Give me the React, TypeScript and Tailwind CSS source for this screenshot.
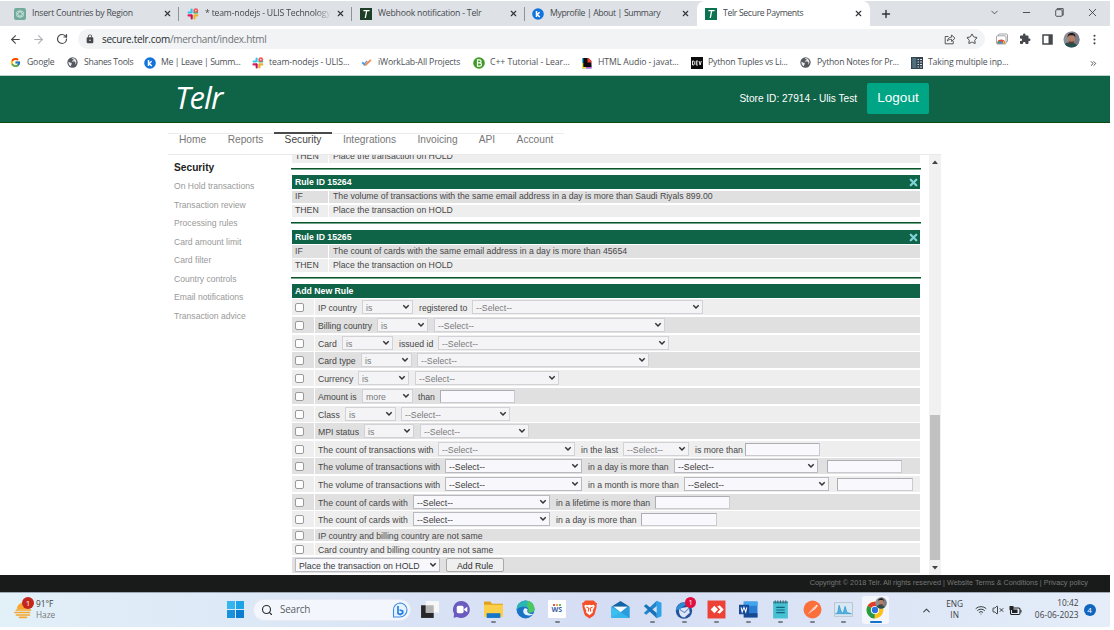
import React from 'react';
import {
  X, Plus, ChevronDown, Minus, ArrowLeft, ArrowRight, RotateCw, Star, MoreVertical,
  ChevronUp, Wifi, VolumeX, Search, ChevronsRight,
} from 'lucide-react';
import { FcGoogle } from 'react-icons/fc';
import { MdExtension, MdLock } from 'react-icons/md';

type Kids = { children?: React.ReactNode };

/* ---------- small site icons ---------- */

const SlackIcon = () => (
  <svg viewBox="0 0 12 12" className="size-3 shrink-0">
    <g strokeWidth="2.1" strokeLinecap="round">
      <path d="M4.6 1.6v2.6M1.6 4.5h2.4" stroke="#36c5f0" />
      <path d="M7.3 4.4h2.9" stroke="#2eb67d" />
      <path d="M1.5 7.4h2.7" stroke="#e01e5a" />
      <path d="M4.7 7.6v2.9" stroke="#c2185b" />
      <path d="M7.4 7.4h2.9M7.4 7.6v2.8" stroke="#ecb22e" />
    </g>
    <circle cx="8.8" cy="2.6" r="2.4" fill="#ef5a5a" />
    <circle cx="8.8" cy="2.6" r="0.8" fill="#ffd5d5" />
  </svg>
);

const KIcon = () => (
  <svg viewBox="0 0 12 12" className="size-3 shrink-0">
    <circle cx="6" cy="6" r="5.8" fill="#1273de" />
    <path d="M4.5 3v6M7.6 4.2 5.2 6.5 7.8 9" stroke="#fff" strokeWidth="1.5" fill="none" />
  </svg>
);

const GlobeIcon = () => (
  <svg viewBox="0 0 12 12" className="size-[11px] shrink-0">
    <circle cx="6" cy="6" r="5.6" fill="#55595e" />
    <path d="M1.6 5.2c1.2 0 1.6 1.2 2.8 1.2 1 0 1.2 1.3.2 2.2-.4.5-.2 1.2.2 1.8C2.400 9.800 1.300 7.600 1.600 5.200zM5 1.500c1 .9 2.600.4 2.500 1.600-.2 1.300-1.900.6-2.300 1.700 1.200.6 2.600-.4 3.700.7.8.9-.2 2 .4 2.900C11 6 10.400 3 8 1.700 7 1.300 6 1.200 5 1.500z" fill="#e9ebed" />
  </svg>
);

const GptIcon = () => (
  <svg viewBox="0 0 12 12" className="size-3 shrink-0">
    <rect width="12" height="12" rx="2" fill="#74aa9c" />
    <g fill="none" stroke="#cfe8e1" strokeWidth=".6">
      <ellipse cx="6" cy="6" rx="2" ry="4" />
      <ellipse cx="6" cy="6" rx="2" ry="4" transform="rotate(60 6 6)" />
      <ellipse cx="6" cy="6" rx="2" ry="4" transform="rotate(120 6 6)" />
    </g>
  </svg>
);

const TelrIcon = ({ dark }: { dark?: boolean }) => (
  <svg viewBox="0 0 12 12" className="size-3 shrink-0">
    <rect width="12" height="12" fill={dark ? '#1d3f27' : '#0c7350'} />
    <path d="M3.400 2.600h6.200M6.700 2.600 5.300 10" stroke="#fff" strokeWidth="1.300" fill="none" />
  </svg>
);

const CheckIcon = () => (
  <svg viewBox="0 0 12 12" className="size-[11px] shrink-0">
    <path d="M1.300 5.800 4.600 9" stroke="#4aa3df" strokeWidth="2.200" fill="none" />
    <path d="M4.600 9.200 10.800 3.200" stroke="#f08a4b" strokeWidth="2" fill="none" />
    <path d="M3.600 7.600 6.800 4.200" stroke="#7b8fc0" strokeWidth="1.500" fill="none" />
  </svg>
);

const BIcon = () => (
  <svg viewBox="0 0 12 12" className="size-3 shrink-0">
    <circle cx="6" cy="6" r="5.800" fill="#3f9a28" />
    <path d="M4.500 2.800h2a1.500 1.500 0 0 1 0 3.100h-2zM4.500 5.900h2.300a1.600 1.600 0 0 1 0 3.300H4.500z" fill="none" stroke="#fff" strokeWidth="1.200" />
  </svg>
);

const AudioIcon = () => (
  <svg viewBox="0 0 12 12" className="size-3 shrink-0">
    <path d="M1 1v10.500h9.500V8H3V1z" fill="#3bb6e8" />
    <path d="M1 6v5.500h4V6z" fill="#f4e04d" />
    <path d="M5 8v3.500h5.500V6z" fill="#c94fd0" />
    <path d="M2.300 1h5l3 3v6h-8z" fill="#0c0c0c" />
    <path d="M6.500 1h1l3 3v1.500h-4z" fill="#ef4136" />
  </svg>
);

const DevIcon = () => (
  <svg viewBox="0 0 12 12" className="size-3 shrink-0">
    <rect width="12" height="12" fill="#0b0b0b" />
    <path d="M1.500 4v4h.8c.8 0 1.100-.5 1.100-1.300V5.300c0-.8-.3-1.300-1.100-1.300zM7 4H5.200v4H7M5.200 6h1.500M8 4l1.100 4L10.300 4" fill="none" stroke="#fff" strokeWidth=".9" />
  </svg>
);

const PanelIcon = () => (
  <svg viewBox="0 0 12 12" className="size-3 shrink-0">
    <rect width="12" height="12" fill="#33434f" />
    <rect x="1.200" y="1" width="4" height="10" fill="#51707f" />
    <path d="M6.500 2.500h1.500M9 2.500h2M6.500 5h1.500M9 5h2M6.500 7.500h1.500M9 7.500h2M6.500 10h1.500M9 10h2" stroke="#d7dee2" strokeWidth="1" />
  </svg>
);

const Avatar = ({ className }: { className: string }) => (
  <svg viewBox="0 0 18 18" className={className}>
    <defs><clipPath id="face"><circle cx="9" cy="9" r="8.500" /></clipPath></defs>
    <g clipPath="url(#face)">
      <rect width="18" height="18" fill="#8d8f95" />
      <path d="M9 0h9v18H12z" fill="#7b7d86" />
      <path d="M0 18c1-5 4-6 8-6s7 2 8 6z" fill="#27504f" />
      <ellipse cx="9" cy="8" rx="3.600" ry="4.800" fill="#b57f66" />
      <path d="M4.800 7c0-4 2-5 4.200-5s4.400 1 4.200 5c-1-2-1.500-2.500-4.200-2.500S5.500 5 4.800 7z" fill="#1f1a1b" />
      <path d="M6.500 10.500c1.500 1 3.500 1 5 0 0 2-1 3.300-2.500 3.300s-2.500-1.300-2.500-3.300z" fill="#5b3b34" />
    </g>
  </svg>
);

/* ---------- browser chrome ---------- */

const Tab = ({ icon, title, sep, width, fade, track = '' }: { icon: React.ReactNode; title: string; sep?: boolean; width: string; fade?: boolean; track?: string }) => (
  <div className={`flex h-full shrink-0 items-center ${width}`}>
    {icon}
    <span className={`ml-1.5 w-[126px] overflow-hidden whitespace-nowrap text-[8.7px] text-[#45494d] ${track} ${fade ? '[mask-image:linear-gradient(to_right,#000_88%,transparent)]' : ''}`}>{title}</span>
    <X className="ml-[5px] size-[9px] shrink-0 text-[#303338]" strokeWidth={3} />
    {sep && <i className="ml-[6px] h-[14px] w-px bg-[#8f9398]" />}
  </div>
);

const Bookmark = ({ icon, label, width, track = '' }: { icon: React.ReactNode; label: string; width: string; track?: string }) => (
  <div className={`flex shrink-0 items-center ${width}`}>
    <span className="flex w-[17px] items-center">{icon}</span>
    <span className={`whitespace-nowrap text-[8.7px] text-[#4d5156] ${track}`}>{label}</span>
  </div>
);

const Browser = () => (
  <div className="font-['Open_Sans','Noto_Sans',sans-serif]">
    <div className="flex h-[25px] bg-[#dee1e6]">
      <div className="flex w-[697px] pl-[14px]">
        <Tab icon={<GptIcon />} title="Insert Countries by Region" sep width="w-[173px]" track="tracking-[-0.23px]" />
        <Tab icon={<SlackIcon />} title="* team-nodejs - ULIS Technology" sep width="w-[173px]" fade track="tracking-[-0.2px]" />
        <Tab icon={<TelrIcon dark />} title="Webhook notification - Telr" sep width="w-[172px]" track="tracking-[-0.22px]" />
        <Tab icon={<KIcon />} title="Myprofile | About | Summary" width="w-[160px]" track="tracking-[-0.38px]" />
      </div>
      <div className="w-[173px] rounded-t-lg bg-white pl-2">
        <Tab icon={<TelrIcon />} title="Telr Secure Payments" width="w-[160px]" track="tracking-[-0.35px]" />
      </div>
      <div className="flex flex-1 items-center text-[#303338]">
        <Plus className="ml-[10px] size-[12px]" strokeWidth={2.8} />
        <div className="flex items-center pb-[3px]">
          <ChevronDown className="ml-[97px] size-[11px]" strokeWidth={1.700} />
          <Minus className="ml-[21px] size-[11px]" strokeWidth={1.800} />
          <svg viewBox="0 0 9 9" className="ml-[23px] size-[9px]" fill="none" stroke="currentColor" strokeWidth=".8">
            <rect x=".7" y="1.700" width="6.500" height="6.600" rx="1" /><path d="M2.200 1.500V.6h6v6.600h-.8" />
          </svg>
          <X className="ml-[22px] size-[13px]" strokeWidth={1.500} />
        </div>
      </div>
    </div>
    <div className="flex h-6 items-center bg-white pt-[2px] text-[#45494d]">
      <ArrowLeft className="ml-[9px] size-[13px]" strokeWidth={2} />
      <ArrowRight className="ml-[10px] size-[13px] text-[#aeb1b5]" strokeWidth={2} />
      <RotateCw className="ml-[11px] size-[12px]" strokeWidth={2.400} />
      <div className="ml-[10px] flex h-5 w-[907px] items-center rounded-full bg-[#f1f3f4] pl-[7px]">
        <MdLock className="size-[10px]" />
        <span className="ml-[7px] w-[166px] whitespace-nowrap text-[10px] tracking-[-0.28px] text-[#707479]"><span className="text-[#2a2c2f]">secure.telr.com</span>/merchant/index.html</span>
        <svg viewBox="0 0 12 12" className="ml-[676px] size-[12px]" fill="none" stroke="currentColor" strokeWidth=".9">
          <path d="M4.500 3.500H1.200v7.300h8V8" /><path d="M3.400 8c.4-2.600 2-3.800 4.200-3.900V2l3.400 3.200-3.400 3.200V6.300C5.800 6.300 4.500 6.700 3.400 8z" />
        </svg>
        <Star className="ml-[10px] size-[12px]" strokeWidth={2} />
      </div>
      <svg viewBox="0 0 12 12" className="ml-[11px] size-[12px]">
        <rect x="2.500" y="1" width="9" height="8" rx="1" fill="none" stroke="#8a8e93" strokeWidth=".8" />
        <rect x=".5" y="2.800" width="9.500" height="8.200" rx="1" fill="#fff" stroke="#8a8e93" strokeWidth=".8" />
        <path d="M1.200 10.600a4 4 0 0 1 8 0z" fill="#e2483d" /><path d="M1.200 10.600 3 7.500l2.200 3.100z" fill="#34a853" /><path d="M9.200 10.600 7.800 7.800 5.200 10.600z" fill="#fbbc05" />
        <path d="M3 10.600a2.200 2.200 0 0 1 4.400 0z" fill="#4285f4" />
      </svg>
      <MdExtension className="ml-[11px] size-[12px]" />
      <svg viewBox="0 0 11 11" className="ml-[11px] size-[11px]"><path d="M1 1h9v9H1z" fill="none" stroke="#45494d" strokeWidth="1.500" /><path d="M6.500 1h3.500v9H6.500z" fill="#45494d" /></svg>
      <Avatar className="ml-[10px] size-[17px]" />
      <MoreVertical className="ml-[8px] size-[13px]" />
    </div>
    <div className="flex h-[25px] items-center bg-white pt-px pl-[10px]">
      <Bookmark icon={<FcGoogle className="size-[11px]" />} label="Google" width="w-[57px]" track="tracking-[-0.2px]" />
      <Bookmark icon={<GlobeIcon />} label="Shanes Tools" width="w-[77px]" track="tracking-[-0.32px]" />
      <Bookmark icon={<KIcon />} label="Me | Leave | Summ..." width="w-[108px]" track="tracking-[-0.42px]" />
      <Bookmark icon={<SlackIcon />} label="team-nodejs - ULIS..." width="w-[109px]" track="tracking-[-0.12px]" />
      <Bookmark icon={<CheckIcon />} label="iWorkLab-All Projects" width="w-[112px]" track="tracking-[-0.16px]" />
      <Bookmark icon={<BIcon />} label="C++ Tutorial - Lear..." width="w-[108px]" track="tracking-[-0.05px]" />
      <Bookmark icon={<AudioIcon />} label="HTML Audio - javat..." width="w-[110px]" track="tracking-[-0.1px]" />
      <Bookmark icon={<DevIcon />} label="Python Tuples vs Li..." width="w-[109px]" track="tracking-[-0.2px]" />
      <Bookmark icon={<GlobeIcon />} label="Python Notes for Pr..." width="w-[111px]" track="tracking-[-0.22px]" />
      <Bookmark icon={<PanelIcon />} label="Taking multiple inp..." width="w-[178px]" track="tracking-[-0.16px]" />
      <ChevronsRight className="size-[9px] text-[#45494d]" strokeWidth={2.500} />
    </div>
  </div>
);

/* ---------- rule list ---------- */

const RuleHead = ({ children, close }: Kids & { close?: boolean }) => (
  <div className="mx-px flex h-[14px] shrink-0 items-center justify-between bg-[#0f6347] px-[3px] text-[8.7px] font-bold text-white">
    <span className="pt-px">{children}</span>
    {close && <X className="mr-[-2px] size-[11px] text-[#7fd3d8]" strokeWidth={5} />}
  </div>
);

const Clause = ({ k, children, cls, bg }: Kids & { k: string; cls: string; bg: string }) => (
  <div className={`mx-px flex shrink-0 gap-px ${cls}`}>
    <div className={`flex w-[36px] items-center pl-[3px] ${bg}`}>{k}</div>
    <div className={`flex flex-1 items-center pl-1 whitespace-nowrap ${bg}`}>{children}</div>
  </div>
);

const Line = ({ cls }: { cls: string }) => <div className={`h-[2px] shrink-0 border-t border-[#0d5228] bg-[#6fa78d] ${cls}`} />;

const L = ({ children, w }: Kids & { w: string }) => <span className={`shrink-0 pt-[2px] leading-[12px] whitespace-nowrap ${w}`}>{children}</span>;

const Sel = ({ children = '--Select--', w, on }: Kids & { w: string; on?: boolean }) => (
  <div className={`flex h-[14px] shrink-0 items-center justify-between border pr-[2px] pl-[3px] text-[8.75px] leading-[12px] whitespace-nowrap ${w} ${on ? 'border-[#b9b9c0] bg-[#f7f7fc] text-[#3a3a3a]' : 'border-[#d2d2d6] bg-[#f4f4f7] text-[#7a7a7a]'}`}>
    <span className="pt-px">{children}</span>
    <svg viewBox="0 0 8 6" className="h-[6px] w-2"><path d="M1.300 1.300 4 4l2.700-2.700" fill="none" stroke="#333" strokeWidth="1.500" /></svg>
  </div>
);

const Inp = ({ w }: { w: string }) => <div className={`h-[13px] shrink-0 border border-[#cacad0] border-t-[#adadb4] border-l-[#adadb4] bg-[#f8f8fd] ${w}`} />;

const Row = ({ children, cls, alt }: Kids & { cls: string; alt?: boolean }) => (
  <div className={`mx-px flex shrink-0 gap-px ${cls}`}>
    <div className={`flex w-[22px] items-center pl-[3px] ${alt ? 'bg-[#e0e0e0]' : 'bg-[#eeeeee]'}`}>
      <span className="size-[9px] rounded-[2px] border border-[#9a9a9a] bg-white" />
    </div>
    <div className={`flex flex-1 items-center pl-[3px] ${alt ? 'bg-[#e0e0e0]' : 'bg-[#eeeeee]'}`}>{children}</div>
  </div>
);

const Rules = () => (
  <div className="flex h-[420px] w-[630px] flex-col overflow-hidden text-[8.7px] text-[#474747]">
    <div className="flex h-2 shrink-0 items-end overflow-hidden">
      <div className="flex-1"><Clause k="THEN" cls="h-[13px]" bg="bg-[#eeeeee]">Place the transaction on HOLD</Clause></div>
    </div>
    <Line cls="mt-[5px]" />
    <div className="mt-[5px] flex flex-col"><RuleHead close>Rule ID 15264</RuleHead></div>
    <Clause k="IF" cls="mt-[2px] h-3" bg="bg-[#e0e0e0]">The volume of transactions with the same email address in a day is more than Saudi Riyals 899.00</Clause>
    <Clause k="THEN" cls="mt-[2px] h-3" bg="bg-[#eeeeee]">Place the transaction on HOLD</Clause>
    <Line cls="mt-[5px]" />
    <div className="mt-[6px] flex flex-col"><RuleHead close>Rule ID 15265</RuleHead></div>
    <Clause k="IF" cls="mt-px h-[13px]" bg="bg-[#e0e0e0]">The count of cards with the same email address in a day is more than 45654</Clause>
    <Clause k="THEN" cls="mt-px h-[13px]" bg="bg-[#eeeeee]">Place the transaction on HOLD</Clause>
    <Line cls="mt-[5px]" />
    <div className="mt-[5px] flex flex-col"><RuleHead>Add New Rule</RuleHead></div>

    <Row cls="mt-px h-4">
      <L w="w-[44px]">IP country</L><Sel w="w-[51px]">is</Sel><L w="ml-[6px] w-[53px]">registered to</L><Sel w="w-[231px]" />
    </Row>
    <Row cls="mt-[2px] h-4" alt>
      <L w="w-[59px]">Billing country</L><Sel w="w-[51px]">is</Sel><Sel w="ml-[6px] w-[231px]" />
    </Row>
    <Row cls="mt-[2px] h-4">
      <L w="w-[24px]">Card</L><Sel w="w-[51px]">is</Sel><L w="ml-[6px] w-[39px]">issued id</L><Sel w="w-[231px]" />
    </Row>
    <Row cls="mt-px h-4" alt>
      <L w="w-[43px]">Card type</L><Sel w="w-[51px]">is</Sel><Sel w="ml-[5px] w-[232px]" />
    </Row>
    <Row cls="mt-[2px] h-4">
      <L w="w-[40px]">Currency</L><Sel w="w-[51px]">is</Sel><Sel w="ml-[6px] w-[144px]" />
    </Row>
    <Row cls="mt-[2px] h-4" alt>
      <L w="w-[44px]">Amount is</L><Sel w="w-[51px]">more</Sel><L w="ml-[5px] w-[22px]">than</L><Inp w="w-[75px]" />
    </Row>
    <Row cls="mt-[2px] h-4">
      <L w="w-[27px]">Class</L><Sel w="w-[51px]">is</Sel><Sel w="ml-[5px] w-[109px]" />
    </Row>
    <Row cls="mt-px h-4" alt>
      <L w="w-[46px]">MPI status</L><Sel w="w-[50px]">is</Sel><Sel w="ml-[6px] w-[109px]" />
    </Row>
    <Row cls="mt-[2px] h-4">
      <L w="w-[120px]">The count of transactions with</L><Sel w="w-[137px]" /><L w="ml-[6px] w-[42px]">in the last</L><Sel w="w-[66px]" /><L w="ml-[6px] w-[50px]">is more than</L><Inp w="w-[75px]" />
    </Row>
    <Row cls="mt-px h-4" alt>
      <L w="w-[127px]">The volume of transactions with</L><Sel on w="w-[137px]" /><L w="ml-[6px] w-[86px]">in a day is more than</L><Sel on w="w-[144px]" /><Inp w="ml-[9px] w-[75px]" />
    </Row>
    <Row cls="mt-[2px] h-4">
      <L w="w-[127px]">The volume of transactions with</L><Sel on w="w-[137px]" /><L w="ml-[6px] w-[96px]">in a month is more than</L><Sel on w="w-[145px]" /><Inp w="ml-[8px] w-[76px]" />
    </Row>
    <Row cls="mt-[2px] h-4" alt>
      <L w="w-[95px]">The count of cards with</L><Sel on w="w-[137px]" /><L w="ml-[6px] w-[99px]">in a lifetime is more than</L><Inp w="w-[75px]" />
    </Row>
    <Row cls="mt-px h-4">
      <L w="w-[95px]">The count of cards with</L><Sel on w="w-[137px]" /><L w="ml-[6px] w-[85px]">in a day is more than</L><Inp w="w-[76px]" />
    </Row>
    <Row cls="mt-[2px] h-3" alt><L w="w-[200px]">IP country and billing country are not same</L></Row>
    <Row cls="mt-[2px] h-3"><L w="w-[200px]">Card country and billing country are not same</L></Row>
    <div className="mx-px mt-[2px] flex h-4 shrink-0 items-center bg-[#e0e0e0] pl-[3px]">
      <Sel on w="w-[145px]">Place the transaction on HOLD</Sel>
      <div className="ml-[6px] flex h-[14px] w-[58px] items-center justify-center rounded-[2px] border border-[#a9a9a9] bg-[#efefef] pt-px text-[8.75px] leading-[12px] text-[#2e2e2e]">Add Rule</div>
    </div>
  </div>
);

const sideLinks = ['On Hold transactions', 'Transaction review', 'Processing rules', 'Card amount limit', 'Card filter', 'Country controls', 'Email notifications', 'Transaction advice'];

const Page = () => (
  <div className="font-['Liberation_Sans',Arial,sans-serif]">
    <div className="flex h-12 items-center border-t border-b border-t-[#b9d3c6] border-b-[#0b4a10] bg-[#0f6347] pl-[175px]">
      <div className="w-[563px] pb-[4px] font-['Open_Sans','Noto_Sans',sans-serif] text-[31px] leading-[42px] tracking-[-0.900px] text-white italic">Telr</div>
      <span className="w-[129px] pr-[10px] text-right text-[10.100px] whitespace-nowrap text-white">Store ID: 27914 - Ulis Test</span>
      <div className="mb-px flex h-[31px] w-[62px] items-center justify-center rounded-[2px] bg-[#00a585] text-[13.500px] text-white">Logout</div>
    </div>
    <div className="h-[452px] bg-white pt-[9px] pl-[168px]">
      <div className="flex h-[23px] w-[773px] border-b border-[#e9e9e9] text-[10.200px] text-[#777]">
        {[
          ['Home', 'w-[49px]'], ['Reports', 'w-[57px]'], ['Security', 'w-[58px]'], ['Integrations', 'w-[75px]'],
          ['Invoicing', 'w-[61px]'], ['API', 'w-[38px]'], ['Account', 'w-[58px]'],
        ].map(([t, w]) => (
          <div key={t} className={`flex justify-center leading-[11px] ${w} ${t === 'Security' ? 'border-t-2 border-[#4a4a4a] text-[#444]' : 'mt-px border-t border-[#ececec]'}`}>{t}</div>
        ))}
      </div>
      <div className="flex h-[420px]">
        <div className="w-[123px] pl-[6px] text-[8.600px] text-[#999]">
          <div className="mt-[6px] mb-[3px] text-[10.200px] leading-[13px] font-bold text-[#222]">Security</div>
          {sideLinks.map((t) => <div key={t} className="h-[18.500px] leading-[18.500px]">{t}</div>)}
        </div>
        <Rules />
        <div className="ml-[8px] flex h-[420px] w-3 flex-col items-center bg-[#f1f1f1]">
          <svg viewBox="0 0 6 4" className="mt-[5px] h-1 w-[6px]"><path d="M0 4h6L3 .5z" fill="#444" /></svg>
          <div className="mt-[251px] h-[145px] w-[10px] bg-[#c1c1c1]" />
          <svg viewBox="0 0 6 4" className="mt-[6px] h-1 w-[6px]"><path d="M0 0h6L3 3.500z" fill="#444" /></svg>
        </div>
      </div>
    </div>
    <div className="flex h-[17px] justify-end bg-[#191b1a] pr-[22px] text-[7.250px] leading-[15px] text-[#777]">
      Copyright © 2018 Telr. All rights reserved | Website Terms &amp; Conditions | Privacy policy
    </div>
  </div>
);

/* ---------- taskbar ---------- */

const TaskApp = ({ children, run = true, active }: Kids & { run?: boolean; active?: boolean }) => (
  <div className="flex h-full w-[31.850px] shrink-0 flex-col items-center">
    <div className={`mt-[3px] flex h-7 w-[27px] flex-col items-center rounded-[3px] pt-[4px] ${active ? 'bg-[#f3f6fc]' : ''}`}>
      <div className="relative size-[19px]">{children}</div>
      {run && <i className={`mt-[2px] h-[2px] shrink-0 rounded-full ${active ? 'w-3 bg-[#1271c9]' : 'w-[5px] bg-[#7c828c]'}`} />}
    </div>
  </div>
);

const S = ({ children }: Kids) => <svg viewBox="0 0 18 18" className="size-[19px]">{children}</svg>;

const Taskbar = () => (
  <div className="flex h-[35px] items-center border-t border-[#9fa9b3] bg-linear-to-r from-[#e2f0f8] via-[#d5ddf4] via-55% to-[#e4edf8] font-['Open_Sans','Noto_Sans',sans-serif] text-[8.300px] text-[#3d4145]">
    <div className="relative ml-[14px] size-5">
      <svg viewBox="0 0 20 20" className="size-5">
        <path d="M3 9a6.500 6.500 0 0 1 13 0z" fill="#f7a52c" />
        <path d="M2.500 10h14M1 12.500h14.500M2.500 15h13M5.500 17.300h7" stroke="#f4a72e" strokeWidth="1.700" strokeLinecap="round" />
      </svg>
      <span className="absolute top-[-3px] left-[8px] flex size-[12px] items-center justify-center rounded-full bg-[#c4261d] text-[8px] text-white">1</span>
    </div>
    <div className="ml-[2px] w-[191px] pb-[2px] leading-[11.500px]"><div>91°F</div><div className="text-[#75797e]">Haze</div></div>
    <div className="mb-px grid size-[17px] grid-cols-2 gap-px">
      <i className="bg-[#35b5ee]" /><i className="bg-[#1fa2e6]" /><i className="bg-[#1892dd]" /><i className="bg-[#0b7cd0]" />
    </div>
    <div className="mb-px ml-[9px] flex h-[22px] w-[158px] items-center rounded-full border border-[#e6eaf5] bg-[#f3f7fd] pl-[7px]">
      <Search className="size-[12px] text-[#2b2e33]" strokeWidth={2.300} />
      <span className="ml-[7px] w-[112px] text-[10px] tracking-[-0.250px] text-[#5a5e63]">Search</span>
      <svg viewBox="0 0 16 16" className="size-4">
        <path d="M8 1a7 7 0 1 1 0 14H1.500V8A6.800 6.800 0 0 1 8 1z" fill="#e7f2ff" stroke="#3f8be0" strokeWidth="1.100" />
        <path d="M6 4v7.500l2.200 1 2.500-1.500V9L7.600 8" fill="none" stroke="#1a7ae0" strokeWidth="1.600" />
      </svg>
    </div>
    <div className="ml-[3px] flex h-full items-center">
      <TaskApp run={false}><S><path d="M1 5h12v12H1z" fill="#272727" /><path d="M5.500 1H18v11H5.500z" fill="#f7f7f8" /><path d="M5.500 5H13v7H5.500z" fill="#b4b4b6" /></S></TaskApp>
      <TaskApp run={false}><S><path d="M9 1a8 8 0 1 1-4 15l-3.500.8L2 13A8 8 0 0 1 9 1z" fill="#6a5bc0" /><rect x="4.500" y="5.500" width="6.500" height="7" rx="1.500" fill="#fff" /><path d="m11.500 8.500 3-2v5l-3-2z" fill="#fff" /></S></TaskApp>
      <TaskApp><S><path d="M0 1.500h6l1.500 2H18V14H0z" fill="#e0a21c" /><path d="M0 4.500h18V16H0z" fill="#fbcf4a" /><path d="M2.500 12.500h13V17h-13z" fill="#1576c8" /></S></TaskApp>
      <TaskApp run={false}><S>
        <circle cx="9" cy="9" r="8.500" fill="#1b73c8" /><path d="M3 3A8.500 8.500 0 0 1 17.500 8.500c0 3-3 4-6 3 1.500-2 0-5-3-5C5 6.500 2.500 7 .8 9 .5 6.500 1.500 4.500 3 3z" fill="#2cb5b5" />
        <path d="M11 .8c4 .8 6.500 4 6.500 7.700 0 3-3 4-6 3 1.500-2 0-4-1-5z" fill="#4cc85e" /><path d="M7.500 8.500c-2 3.500 1 7 6.500 6 1.200-.3 1.800-.8 2.300-1.500-2.800.6-5.300-.3-5.600-2-.2-1 .3-1.500.5-2C9.500 7.500 8.200 7.500 7.500 8.500z" fill="#e3f3fc" />
      </S></TaskApp>
      <TaskApp><div className="flex size-[18px] flex-col items-center justify-center rounded-[1px] bg-white text-[7px] leading-[8px] font-bold text-[#3b5fa9]">
        <span className="flex gap-px"><i className="size-[2px] bg-[#e2574c]" /><i className="size-[2px] bg-[#f0a04b]" /><i className="size-[2px] bg-[#6dbb63]" /></span>WS</div></TaskApp>
      <TaskApp run={false}><S><path d="M5 .5h8l1.500 1.700 1.800 1-.8 2 .3 1-2 7.300c-.5 1.500-3.300 3-4.800 4-1.500-1-4.300-2.500-4.800-4L2.200 6.200l.3-1-.8-2 1.800-1z" fill="#f4502a" /><path d="M5 4.500 7.500 5 9 4.500l1.500.5 2.500-.5 1 1.500-2 4 .3 1.500L9 14.500l-3.300-3L6 10 4 6z" fill="#fff" /><path d="M6 6.500 8.300 7.800 7.800 11M12 6.500 9.700 7.800l.5 3.200" stroke="#f4502a" strokeWidth="1" fill="none" /></S></TaskApp>
      <TaskApp run={false}><S><path d="M.3 6.500 9 1l8.700 5.500z" fill="#1464a5" /><path d="M.3 6.500h17.400V17H.3z" fill="#2a9bdc" /><path d="M2.500 6.500h13L9 11.500z" fill="#f5fbff" /><path d="M.3 6.500 9 12 .3 17z" fill="#3cc0f0" /><path d="M.3 17 9 11.500l8.700 5.500z" fill="#35b5ea" /></S></TaskApp>
      <TaskApp><S><path d="M13 .7 17.500 2.700v12.600L13 17.300z" fill="#2ea2e8" /><path d="M13 .7v5L3 14 .8 12.200z" fill="#1f86ce" /><path d="M13 17.300v-5L3 4 .8 5.800z" fill="#1673b8" /></S></TaskApp>
      <TaskApp><S><circle cx="8.500" cy="10" r="7.800" fill="#23539f" /><path d="M4 8 13 6.500l1 5.500-5 4.500c-3 0-6-3-5-8.500z" fill="#dfe7f5" /><path d="M4.500 9 9 12l4.500-4.500" stroke="#6c8cc4" fill="none" /><path d="M.8 10c.7-4 3.200-6.500 7.700-7.800 2-.3 4 .3 5 1.300-3 .5-5 1.500-6 3C6 8.500 3 9.500.8 10z" fill="#2f8bd6" /></S>
        <span className="absolute top-[-3px] left-[10px] flex size-[11px] items-center justify-center rounded-full bg-[#e01040] text-[7.500px] text-white">1</span></TaskApp>
      <TaskApp><S><path d="M.5.5h17v17H.5z" fill="#ee4136" /><path d="M7 5.500 10.500 9 7 12.500 3.500 9z" fill="#fff" /><path d="M10.200 5.800 13.400 9l-3.200 3.200M11.500 5.500 15 9l-3.500 3.500" fill="none" stroke="#fff" strokeWidth="1.200" /></S></TaskApp>
      <TaskApp><S><path d="M4.500 1.500h13v15h-13z" fill="#2b7cd3" /><path d="M4.500 1.500h13v4h-13z" fill="#41a5ee" /><path d="M4.500 12.500h13v4h-13z" fill="#174a8f" /><path d="M0 4.500h9.500v9H0z" fill="#164b9a" /><path d="m2 7 1 4.300L4.700 7l1.700 4.300 1-4.300" fill="none" stroke="#fff" strokeWidth="1" /></S></TaskApp>
      <TaskApp><S><path d="M2 1.500h14v16H2z" fill="#46c0d3" /><path d="M2 1.500h14V3H2z" fill="#2b8da2" /><path d="M4 .3v3M6.500.3v3M9 .3v3M11.500.3v3M14 .3v3" stroke="#4a5c66" strokeWidth=".9" /><path d="M5 7h8M5 9.500h8M5 12h8" stroke="#13647b" strokeWidth="1.100" /></S></TaskApp>
      <TaskApp><S><circle cx="9" cy="9" r="8.500" fill="#fa6f3a" /><path d="M4.500 13.500 10 7l3-2.500 1 1L11.500 8.500z" fill="#fff" /><path d="M6 12 12.500 5.500" stroke="#f7b59a" strokeWidth="1" /></S></TaskApp>
      <TaskApp><S><path d="M.5 2.500h17v13H.5z" fill="#d9e9f4" stroke="#b4bec6" strokeWidth=".8" /><path d="M1.500 13 3.500 12l1.300-7 1.700 5 2 3L10.500 6l1.500 5 1 1 3.500 1z" fill="#4fb4e2" stroke="#2a8fc8" strokeWidth=".6" /></S></TaskApp>
      <TaskApp active><S>
        <circle cx="8.500" cy="9.500" r="8" fill="#fbc116" /><path d="M8.500 9.500 1.600 5.500A8 8 0 0 1 15.400 5.500z" fill="#e33b2e" /><path d="M8.500 9.500 1.600 5.500A8 8 0 0 0 8 17.500z" fill="#259b47" />
        <circle cx="8.500" cy="9.500" r="3.900" fill="#fff" /><circle cx="8.500" cy="9.500" r="3" fill="#2b74e2" /></S>
        <Avatar className="absolute top-[-3px] left-[9px] size-[12px]" /></TaskApp>
    </div>
    <ChevronUp className="ml-[29px] size-[11px]" strokeWidth={2.200} />
    <div className="ml-[11px] w-[24px] pb-[2px] text-center leading-[11.500px]"><div>ENG</div><div>IN</div></div>
    <Wifi className="ml-[8px] size-[12px]" strokeWidth={2} />
    <VolumeX className="ml-[5px] size-[12px]" strokeWidth={2} />
    <svg viewBox="0 0 13 11" className="ml-[5px] h-[11px] w-[13px]"><rect x="1.500" y="3" width="9.500" height="6.500" rx="1.200" fill="none" stroke="#222" strokeWidth="1.100" /><path d="M11.500 5h1v2.500h-1zM3 4.500h5.500v3.500H3zM.5 1h4v4h-4z" fill="#222" /></svg>
    <div className="w-[57px] pb-[3px] text-right leading-[11.500px] tracking-[0.05px] whitespace-nowrap"><div>10:42</div><div>06-06-2023</div></div>
    <span className="mb-px ml-[5px] flex size-[12px] items-center justify-center rounded-full bg-[#1166bf] text-[8px] text-white">4</span>
  </div>
);

export default function App() {
  return (
    <div className="h-[630px] w-[1114px] overflow-hidden bg-white pt-px">
      <div className="w-[1110px]">
        <Browser />
        <Page />
        <Taskbar />
      </div>
    </div>
  );
}
